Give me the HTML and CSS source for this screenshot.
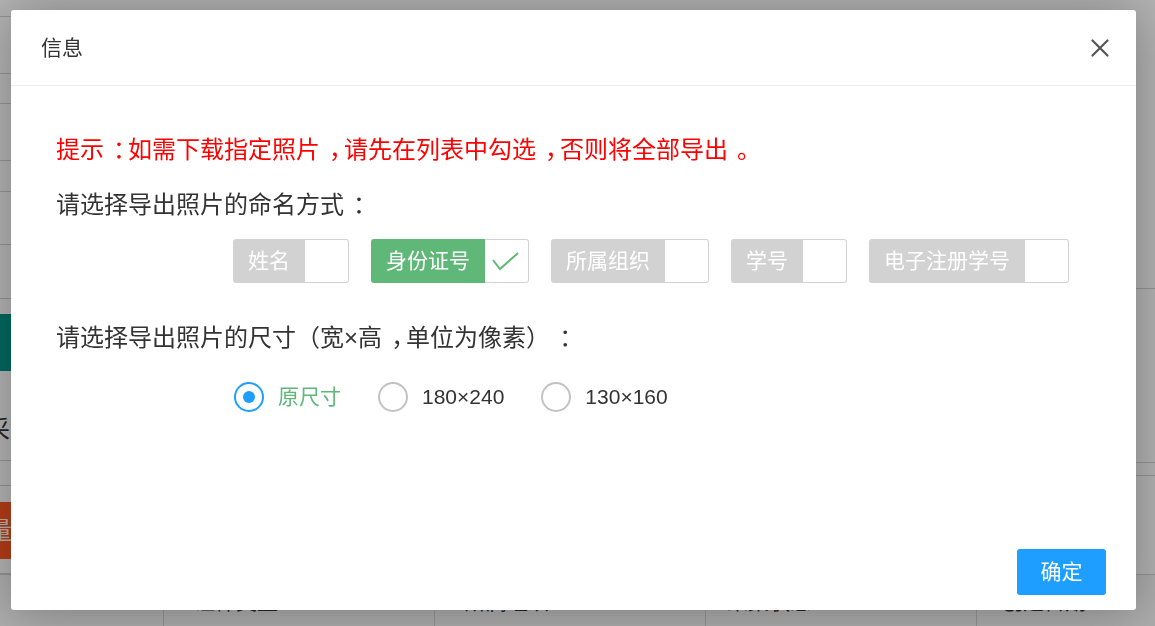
FILE: index.html
```html
<!DOCTYPE html>
<html lang="zh-CN">
<head>
<meta charset="utf-8">
<title>信息</title>
<link rel="stylesheet" href="styles.css">
</head>
<body>
<div class="bg">
  <div class="bg-top">
    <aside class="side">
      <div class="s-row r1"></div>
      <div class="s-row r2"></div>
      <div class="s-row r3"></div>
      <div class="s-row r4"></div>
      <div class="s-row r5"></div>
      <div class="s-row r6"></div>
      <div class="s-row r7"></div>
      <div class="s-tool">
        <div class="s-btn teal">导入数据</div>
        <div class="s-text">采集</div>
      </div>
      <div class="s-row r8"></div>
      <div class="s-row r9"></div>
      <div class="s-tool2">
        <div class="s-btn orange">批量</div>
      </div>
    </aside>
    <div class="bg-main">
      <div class="m-row m1"></div>
      <div class="m-row m2"></div>
      <div class="m-row m3"></div>
    </div>
  </div>
  <div class="thead">
    <div class="th c1"></div>
    <div class="th c2">证件类型<span class="caret k2">▾</span></div>
    <div class="th c3">所属组织<span class="caret k3">▾</span></div>
    <div class="th c4">采集状态<span class="caret k4">▾</span></div>
    <div class="th c5">创建日期<span class="caret k5">▾</span></div>
  </div>
</div>

<div class="shade"></div>

<div class="dialog">
  <div class="dlg-head">
    <span class="dlg-title">信息</span>
    <span class="dlg-close">
      <svg width="18" height="18" viewBox="0 0 18 18"><path d="M1.5 1.5 L16.5 16.5 M16.5 1.5 L1.5 16.5" stroke="#555" stroke-width="2.2" stroke-linecap="round" fill="none"/></svg>
    </span>
  </div>
  <div class="dlg-body">
    <p class="tip">提示<span class="pn">：</span>如需下载指定照片<span class="pn">，</span>请先在列表中勾选<span class="pn">，</span>否则将全部导出<span class="pn">。</span></p>
    <p class="label">请选择导出照片的命名方式<span class="pn">：</span></p>
    <div class="chips">
      <span class="chip"><span class="chip-label">姓名</span><span class="chip-box"></span></span>
      <span class="chip on"><span class="chip-label">身份证号</span><span class="chip-box"><svg width="43" height="42" viewBox="0 0 43 42"><polyline points="8,20 15,29 33,13" fill="none" stroke="#5FB878" stroke-width="2"/></svg></span></span>
      <span class="chip"><span class="chip-label">所属组织</span><span class="chip-box"></span></span>
      <span class="chip"><span class="chip-label">学号</span><span class="chip-box"></span></span>
      <span class="chip"><span class="chip-label">电子注册学号</span><span class="chip-box"></span></span>
    </div>
    <p class="label label2">请选择导出照片的尺寸（宽×高<span class="pn">，</span>单位为像素）<span class="pn">：</span></p>
    <div class="radios">
      <span class="radio on"><span class="circle"></span><span class="r-text">原尺寸</span></span>
      <span class="radio"><span class="circle"></span><span class="r-text">180×240</span></span>
      <span class="radio"><span class="circle"></span><span class="r-text">130×160</span></span>
    </div>
  </div>
  <div class="dlg-foot">
    <button class="btn" type="button">确定</button>
  </div>
</div>
</body>
</html>
```

FILE: styles.css
```css
* { box-sizing: border-box; }
html, body {
  margin: 0;
  padding: 0;
  width: 1155px;
  height: 626px;
  overflow: hidden;
  background: #fff;
  font-family: "Liberation Sans", "Noto Sans CJK SC", sans-serif;
  color: #333;
  text-spacing-trim: space-all;
}

/* ---------- background page ---------- */
.bg { width: 1155px; }
.bg-top { display: flex; height: 574px; }
.side { width: 163px; display: flex; flex-direction: column; }
.s-row { border-bottom: 1px solid #d2d2d2; }
.r1 { height: 17px; }
.r2 { height: 57px; }
.r3 { height: 30px; }
.r4 { height: 57px; }
.r5 { height: 31px; }
.r6 { height: 54px; }
.r7 { height: 54px; }
.s-tool { padding-top: 15px; }
.s-btn {
  height: 57px;
  line-height: 57px;
  width: 140px;
  color: #fff;
  font-size: 24px;
  white-space: nowrap;
  overflow: hidden;
}
.teal { background: #009688; padding-left: 20px; }
.orange { background: #FF5722; text-indent: -36px; }
.s-text {
  margin-top: 44px;
  margin-left: -14px;
  font-size: 24px;
  line-height: 30px;
  color: #333;
}
.r8 { height: 16px; }
.r9 { height: 25px; }
.s-tool2 { padding-top: 16px; height: 88px; border-bottom: 1px solid #d2d2d2; }
.bg-main { flex: 1; display: flex; flex-direction: column; }
.m-row { border-bottom: 1px solid #d2d2d2; }
.m1 { height: 289px; }
.m2 { height: 174px; }
.m3 { height: 13px; }

.thead {
  display: flex;
  height: 80px;
  border-top: 1px solid #d2d2d2;
  background: #f6f6f6;
}
.th {
  border-right: 1px solid #d2d2d2;
  font-size: 21px;
  line-height: 54px;
  padding-left: 30px;
  color: #333;
  white-space: nowrap;
}
.c1 { width: 164px; }
.c2 { width: 271px; }
.c3 { width: 271px; padding-left: 30px; }
.c4 { width: 271px; padding-left: 21px; }
.c5 { flex: 1; border-right: 0; padding-left: 25px; }
.caret { font-size: 12px; color: #999; }
.k2 { margin-left: 50px; }
.k3 { margin-left: 20px; }
.k4 { margin-left: 36px; }
.k5 { margin-left: 26px; }

/* ---------- shade ---------- */
.shade {
  position: fixed;
  inset: 0;
  background: rgba(0, 0, 0, 0.3);
}

/* ---------- dialog ---------- */
.dialog {
  position: fixed;
  left: 11px;
  top: 10px;
  width: 1125px;
  height: 600px;
  background: #fff;
  border-radius: 3px;
  box-shadow: 1px 1px 50px rgba(0, 0, 0, 0.3);
  display: flex;
  flex-direction: column;
}
.dlg-head {
  height: 76px;
  border-bottom: 1px solid #eee;
  padding: 0 27px 0 30px;
  display: flex;
  align-items: center;
  justify-content: space-between;
}
.dlg-title {
  font-size: 21px;
  line-height: 75px;
  color: #333;
}
.dlg-close { display: flex; width: 18px; height: 18px; }

.dlg-body {
  flex: 1;
  padding: 46px 45px 0;
}
.dlg-body p { margin: 0; }
/* full-width punctuation sits toward the middle/right of its em box in the original font */
.pn {
  padding-left: 0.38em;
  margin-right: -0.38em;
}
.tip {
  font-size: 24px;
  line-height: 36px;
  color: #f00;
}
.label {
  margin-top: 19px !important;
  font-size: 24px;
  line-height: 36px;
  color: #333;
}
.label2 { margin-top: 37px !important; }

.chips {
  margin-top: 16px;
  padding-left: 177px;
  display: flex;
  gap: 22px;
}
.chip { display: inline-flex; height: 44px; }
.chip-label {
  padding: 0 15px;
  line-height: 44px;
  font-size: 21px;
  color: #fff;
  background: #d2d2d2;
  border-radius: 3px 0 0 3px;
  white-space: nowrap;
}
.chip.on .chip-label { background: #5FB878; }
.chip-box {
  width: 44px;
  height: 44px;
  border: 1px solid #d2d2d2;
  border-left: 0;
  border-radius: 0 3px 3px 0;
  background: #fff;
  display: flex;
}

.radios {
  margin-top: 18px;
  padding-left: 178px;
  display: flex;
  gap: 37px;
}
.radio {
  display: inline-flex;
  align-items: center;
  gap: 14px;
  height: 45px;
}
.circle {
  width: 30px;
  height: 30px;
  border: 2.5px solid #c2c2c2;
  border-radius: 50%;
  display: grid;
  place-items: center;
}
.radio.on .circle { border-color: #1E9FFF; }
.radio.on .circle::after {
  content: "";
  width: 12px;
  height: 12px;
  border-radius: 50%;
  background: #1E9FFF;
}
.r-text { font-size: 21px; line-height: 45px; color: #333; }
.radio.on .r-text { color: #5FB878; }

.dlg-foot {
  padding: 0 30px 15px;
  display: flex;
  justify-content: flex-end;
}
.btn {
  height: 46px;
  line-height: 46px;
  padding: 0 23.5px;
  border: 0;
  border-radius: 3px;
  background: #1E9FFF;
  color: #fff;
  font-family: "Liberation Sans", "Noto Sans CJK SC", sans-serif;
  font-size: 21px;
}
```
